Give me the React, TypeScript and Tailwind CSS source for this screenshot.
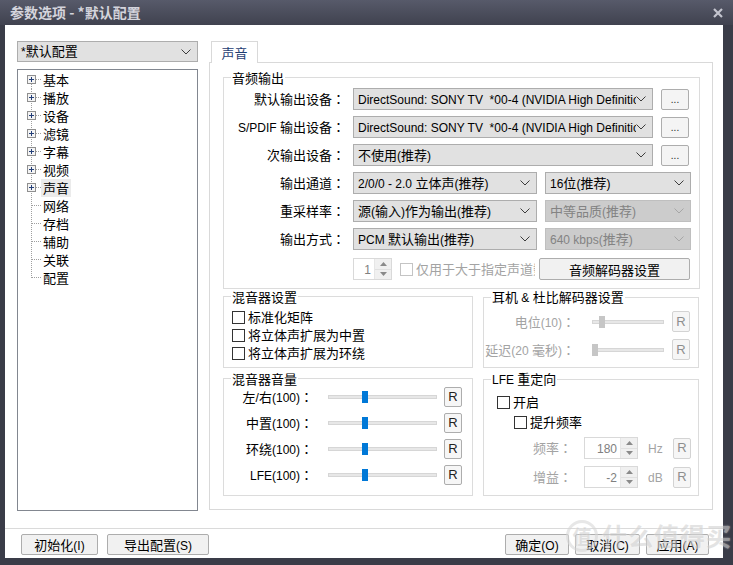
import React from 'react';

// MPC-HC style options dialog, audio page.

// Latin runs in a Segoe-like narrow face at 12px, CJK runs at 13px.
// The full-width colon is taken from the TC face, where it sits centred.
function T({ s }: { s: string }) {
  const parts = s.split(/([\u2E80-\u9FFF\u3000-\u303F\uFF00-\uFFEF]+)/);
  return (
    <>
      {parts.map((p, i) => {
        if (!p) return null;
        if (i % 2 === 0) {
          return (
            <span key={i} className="font-['Liberation_Sans',sans-serif] text-[12px]">
              {p}
            </span>
          );
        }
        if (p.endsWith('：')) {
          return (
            <span key={i}>
              {p.slice(0, -1)}
              <span className="font-['Noto_Sans_CJK_TC',sans-serif]">：</span>
            </span>
          );
        }
        return <span key={i}>{p}</span>;
      })}
    </>
  );
}

const Chevron = ({ color = '#3c3c3c' }: { color?: string }) => (
  <svg width="10" height="6" viewBox="0 0 10 6" className="shrink-0">
    <path d="M0.5 0.5 L5 5 L9.5 0.5" fill="none" stroke={color} strokeWidth="1" />
  </svg>
);

function Combo({ text, className, disabled }: { text: string; className: string; disabled?: boolean }) {
  return (
    <div
      className={
        'flex items-center h-[22px] border pl-[4px] pr-[6px] ' +
        (disabled ? 'bg-[#cccccc] border-[#bfbfbf] text-[#838383] ' : 'bg-[#e1e1e1] border-[#adadad] text-black ') +
        className
      }
    >
      <span className="flex-1 overflow-hidden whitespace-pre leading-[20px]">
        <T s={text} />
      </span>
      <Chevron color={disabled ? '#a6a6a6' : '#3c3c3c'} />
    </div>
  );
}

function Dots() {
  return (
    <button type="button" className="ml-[8px] w-[28px] h-[21px] rounded-[2px] border border-[#adadad] bg-[#f4f4f4] text-[10px] leading-[18px] text-[#333]">
      ...
    </button>
  );
}

function RBtn({ disabled, className = 'h-[20px]' }: { disabled?: boolean; className?: string }) {
  return (
    <button
      type="button"
      className={
        'w-[18px] rounded-[2px] border bg-[#f6f6f6] text-[13px] flex items-center justify-center ' +
        (disabled ? 'border-[#d3d3d3] text-[#8e8e8e] ' : 'border-[#adadad] text-[#222] ') +
        className
      }
    >
      <span className="font-['Liberation_Sans',sans-serif] text-[13px]">R</span>
    </button>
  );
}

function Slider({ left, disabled, className }: { left: string; disabled?: boolean; className: string }) {
  return (
    <div className={'relative h-[4px] border border-[#d6d6d6] bg-[#e7e7e7] ' + className}>
      <span className={'absolute top-[-5px] w-[6px] h-[12px] ' + left + (disabled ? ' bg-[#c6c6c6]' : ' bg-[#0078d7]')} />
    </div>
  );
}

function Check({ label, disabled, className = '' }: { label: string; disabled?: boolean; className?: string }) {
  return (
    <div className={'flex items-center h-[18px] ' + className}>
      <span className={'w-[13px] h-[13px] shrink-0 border bg-white ' + (disabled ? 'border-[#c4c4c4]' : 'border-[#333]')} />
      <span className={'ml-[3px] whitespace-nowrap ' + (disabled ? 'text-[#a3a3a3]' : 'text-black')}>{label}</span>
    </div>
  );
}

function Spin({ value, className }: { value: string; className: string }) {
  return (
    <div className={'flex h-[22px] border border-[#d9d9d9] bg-white ' + className}>
      <span className="flex-1 text-right pr-[3px] leading-[20px] text-[#808080]">
        <T s={value} />
      </span>
      <div className="w-[17px] flex flex-col bg-[#f0f0f0] border-l border-[#e6e6e6]">
        <div className="flex-1 flex items-center justify-center border-b border-[#e0e0e0]">
          <svg width="7" height="4" viewBox="0 0 7 4"><path d="M0 4 L3.5 0 L7 4 Z" fill="#8a8a8a" /></svg>
        </div>
        <div className="flex-1 flex items-center justify-center">
          <svg width="7" height="4" viewBox="0 0 7 4"><path d="M0 0 L3.5 4 L7 0 Z" fill="#8a8a8a" /></svg>
        </div>
      </div>
    </div>
  );
}

function Group({ title, className, children }: { title: string; className: string; children: React.ReactNode }) {
  return (
    <fieldset className={'border border-[#dcdcdc] ' + className}>
      <legend className="ml-[7px] px-[1px] leading-[17px] text-black">
        <T s={title} />
      </legend>
      {children}
    </fieldset>
  );
}

const tree = [
  { t: '基本', plus: true },
  { t: '播放', plus: true },
  { t: '设备', plus: true },
  { t: '滤镜', plus: true },
  { t: '字幕', plus: true },
  { t: '视频', plus: true },
  { t: '声音', plus: true, sel: true },
  { t: '网络' },
  { t: '存档' },
  { t: '辅助' },
  { t: '关联' },
  { t: '配置' },
];

function TreeRow({ t, plus, sel, first, last }: { t: string; plus?: boolean; sel?: boolean; first: boolean; last: boolean }) {
  return (
    <div className="flex items-center h-[18px]">
      <svg width="23" height="18" viewBox="0 0 23 18" className="shrink-0">
        <line x1="13.5" y1={first ? 9 : 0} x2="13.5" y2={last ? 9 : 18} stroke="#a0a0a0" strokeDasharray="1 1" />
        <line x1="14" y1="8.5" x2="23" y2="8.5" stroke="#a0a0a0" strokeDasharray="1 1" />
        {plus && (
          <g>
            <rect x="9.5" y="4.5" width="8" height="8" fill="#f4f4f4" stroke="#8f8f8f" />
            <line x1="11" y1="8.5" x2="16" y2="8.5" stroke="#243f78" />
            <line x1="13.5" y1="6" x2="13.5" y2="11" stroke="#243f78" />
          </g>
        )}
      </svg>
      <span className={'px-[2px] leading-[18px] ' + (sel ? 'bg-[#ebebeb]' : '')}>{t}</span>
    </div>
  );
}

function Btn({ label, className }: { label: string; className: string }) {
  return (
    <button type="button" className={'h-[21px] rounded-[2px] border border-[#adadad] bg-[#f1f1f1] text-[13px] leading-[19px] text-black ' + className}>
      <T s={label} />
    </button>
  );
}

function Label({ s, className }: { s: string; className: string }) {
  return (
    <span className={'shrink-0 text-right whitespace-nowrap ' + className}>
      <T s={s} />
    </span>
  );
}

export default function App() {
  return (
    <div className="relative w-[733px] h-[565px] flex flex-col overflow-hidden bg-[#3a3c48] text-[13px] text-black font-['Noto_Sans_CJK_SC',sans-serif]">
      {/* title bar */}
      <div className="h-[25px] shrink-0 flex items-center justify-between pl-[10px] pr-[10px] bg-gradient-to-b from-[#575a6a] to-[#40424f]">
        <span className="text-[14px] font-bold text-[#d4d4dc] leading-[25px]">参数选项 - *默认配置</span>
        <svg width="10" height="10" viewBox="0 0 10 10">
          <path d="M1 1 L9 9 M9 1 L1 9" stroke="#c4c5cf" strokeWidth="2.2" />
        </svg>
      </div>

      {/* client area */}
      <div className="flex-1 ml-[5px] mr-[10px] mb-[7px] bg-white flex flex-col">
        <div className="flex pt-[16px] pl-[12px] gap-[11px]">
          {/* left column */}
          <div className="w-[181px] flex flex-col">
            <div className="flex items-center h-[21px] border border-[#adadad] bg-[#e1e1e1] pl-[3px] pr-[6px]">
              <span className="flex-1 leading-[19px]">
                <T s="*默认配置" />
              </span>
              <Chevron />
            </div>
            <div className="mt-[7px] h-[442px] border border-[#828790] pt-[1px]">
              {tree.map((it, i) => (
                <TreeRow key={it.t} t={it.t} plus={it.plus} sel={it.sel} first={i === 0} last={i === tree.length - 1} />
              ))}
            </div>
          </div>

          {/* right column */}
          <div className="w-[504px] flex flex-col">
            <div className="flex">
              <div className="relative z-10 ml-[2px] mb-[-1px] h-[22px] w-[47px] border border-b-0 border-[#d9d9d9] bg-white flex items-center justify-center text-[#1f3d73]">
                声音
              </div>
            </div>
            <div className="h-[448px] border border-[#d9d9d9] pt-[6px] pl-[13px] pr-[12px] flex flex-col">
              <Group title="音频输出" className="pt-[2px] pb-[8px]">
                <div className="flex flex-col gap-[6px]">
                  <div className="flex items-center">
                    <Label s="默认输出设备：" className="w-[121px]" />
                    <Combo className="ml-[8px] w-[300px]" text="DirectSound: SONY TV  *00-4 (NVIDIA High Definition Audio)" />
                    <Dots />
                  </div>
                  <div className="flex items-center">
                    <Label s="S/PDIF 输出设备：" className="w-[121px]" />
                    <Combo className="ml-[8px] w-[300px]" text="DirectSound: SONY TV  *00-4 (NVIDIA High Definition Audio)" />
                    <Dots />
                  </div>
                  <div className="flex items-center">
                    <Label s="次输出设备：" className="w-[121px]" />
                    <Combo className="ml-[8px] w-[300px]" text="不使用(推荐)" />
                    <Dots />
                  </div>
                  <div className="flex items-center">
                    <Label s="输出通道：" className="w-[121px]" />
                    <Combo className="ml-[8px] w-[184px]" text="2/0/0 - 2.0 立体声(推荐)" />
                    <Combo className="ml-[8px] w-[146px]" text="16位(推荐)" />
                  </div>
                  <div className="flex items-center">
                    <Label s="重采样率：" className="w-[121px]" />
                    <Combo className="ml-[8px] w-[184px]" text="源(输入)作为输出(推荐)" />
                    <Combo className="ml-[8px] w-[146px]" text="中等品质(推荐)" disabled />
                  </div>
                  <div className="flex items-center">
                    <Label s="输出方式：" className="w-[121px]" />
                    <Combo className="ml-[8px] w-[184px]" text="PCM 默认输出(推荐)" />
                    <Combo className="ml-[8px] w-[146px]" text="640 kbps(推荐)" disabled />
                  </div>
                  <div className="flex items-center mt-[2px] pl-[129px]">
                    <Spin value="1" className="w-[39px]" />
                    <div className="ml-[8px] w-[135px] overflow-hidden">
                      <Check label="仅用于大于指定声道数" disabled />
                    </div>
                    <Btn label="音频解码器设置" className="ml-[4px] w-[151px] h-[22px]" />
                  </div>
                </div>
              </Group>

              <div className="flex gap-[10px] mt-[-1px]">
                <Group title="混音器设置" className="w-[250px] h-[80px] pt-[3px]">
                  <div className="pl-[8px]">
                    <Check label="标准化矩阵" />
                    <Check label="将立体声扩展为中置" />
                    <Check label="将立体声扩展为环绕" />
                  </div>
                </Group>
                <Group title="耳机 & 杜比解码器设置" className="w-[216px] h-[80px] pt-[4px]">
                  <div className="flex flex-col gap-[7px] text-[#a3a3a3]">
                    <div className="flex items-center h-[21px]">
                      <Label s="电位(10)：" className="w-[91px]" />
                      <Slider className="ml-[17px] w-[72px]" left="left-[6px]" disabled />
                      <RBtn disabled className="ml-[8px] h-[21px]" />
                    </div>
                    <div className="flex items-center h-[21px]">
                      <Label s="延迟(20 毫秒)：" className="w-[91px]" />
                      <Slider className="ml-[17px] w-[72px]" left="left-[-1px]" disabled />
                      <RBtn disabled className="ml-[8px] h-[21px]" />
                    </div>
                  </div>
                </Group>
              </div>

              <div className="flex gap-[10px] mt-[2px]">
                <Group title="混音器音量" className="w-[250px] h-[126px]">
                  <div className="flex flex-col gap-[6px]">
                    {['左/右(100)：', '中置(100)：', '环绕(100)：', 'LFE(100)：'].map((l) => (
                      <div key={l} className="flex items-center h-[20px]">
                        <Label s={l} className="w-[89px]" />
                        <Slider className="ml-[15px] w-[109px]" left="left-[33px]" />
                        <RBtn className="ml-[7px] h-[20px]" />
                      </div>
                    ))}
                  </div>
                </Group>
                <Group title="LFE 重定向" className="w-[216px] h-[126px] pt-[4px]">
                  <Check label="开启" className="pl-[13px]" />
                  <Check label="提升频率" className="pl-[30px] mt-[2px]" />
                  <div className="flex flex-col gap-[7px] mt-[6px] text-[#a3a3a3]">
                    <div className="flex items-center">
                      <Label s="频率：" className="w-[88px]" />
                      <Spin value="180" className="ml-[12px] w-[54px]" />
                      <span className="ml-[10px] w-[25px]">
                        <T s="Hz" />
                      </span>
                      <RBtn disabled className="h-[21px]" />
                    </div>
                    <div className="flex items-center">
                      <Label s="增益：" className="w-[88px]" />
                      <Spin value="-2" className="ml-[12px] w-[54px]" />
                      <span className="ml-[10px] w-[25px]">
                        <T s="dB" />
                      </span>
                      <RBtn disabled className="h-[21px]" />
                    </div>
                  </div>
                </Group>
              </div>
            </div>
          </div>
        </div>

        <div className="mt-[17px] h-px bg-[#dadada]" />

        <div className="flex items-center mt-[5px] pl-[16px] pr-[14px]">
          <Btn label="初始化(I)" className="w-[77px]" />
          <Btn label="导出配置(S)" className="ml-[9px] w-[102px]" />
          <div className="flex-1" />
          <Btn label="确定(O)" className="w-[64px]" />
          <Btn label="取消(C)" className="ml-[6px] w-[65px]" />
          <Btn label="应用(A)" className="ml-[6px] w-[63px]" />
        </div>
      </div>

      {/* watermark */}
      <div className="absolute left-[566px] top-[517px] flex items-center gap-[4px] pointer-events-none opacity-60 text-[#d2d2d2] [text-shadow:0_0_2px_#fff]">
        <span className="w-[32px] h-[32px] rounded-full border-[3px] border-[#d8d8d8] flex items-center justify-center text-[19px] font-bold">值</span>
        <span className="text-[25px] font-bold tracking-[1px]">什么值得买</span>
      </div>
    </div>
  );
}
